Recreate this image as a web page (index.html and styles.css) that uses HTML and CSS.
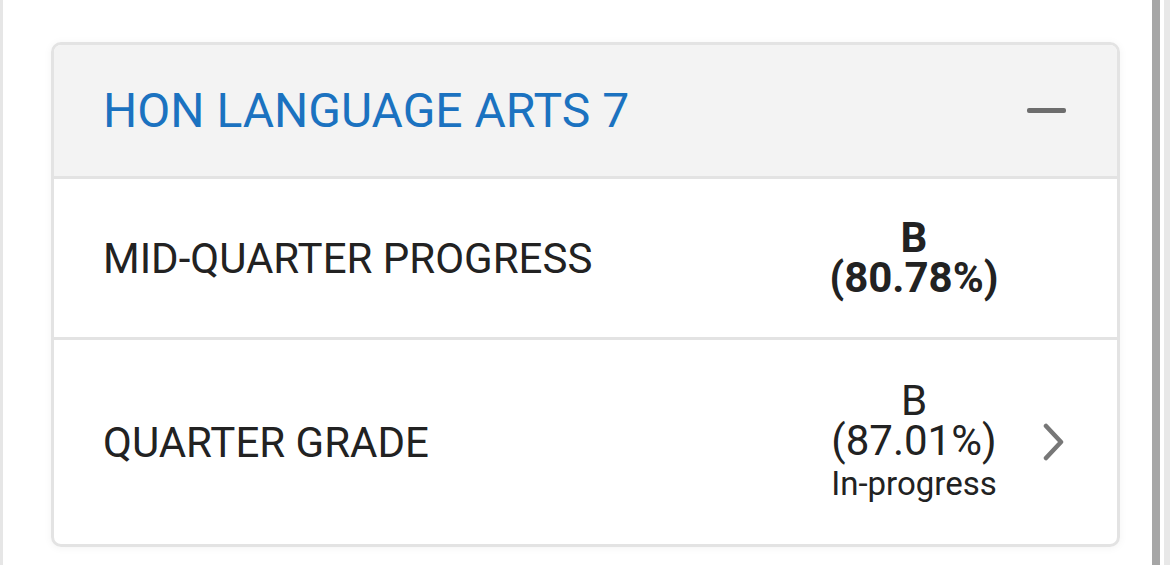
FILE: index.html
```html
<!DOCTYPE html>
<html lang="en">
<head>
    <meta charset="UTF-8">
    <meta name="viewport" content="width=device-width, initial-scale=1.0">
    <title>Grades</title>
    <link rel="stylesheet" href="styles.css">
</head>
<body>
    <div class="page">
        <div class="content">
            <div class="card">
                <div class="card-head">
                    <h2 class="course">HON LANGUAGE ARTS 7</h2>
                    <span class="collapse"></span>
                </div>
                <div class="row">
                    <div class="label">MID-QUARTER PROGRESS</div>
                    <div class="grade bold">B<br>(80.78%)</div>
                    <div class="go"></div>
                </div>
                <div class="row tall">
                    <div class="label">QUARTER GRADE</div>
                    <div class="grade">B<br>(87.01%)<span class="status">In-progress</span></div>
                    <div class="go">
                        <svg width="22" height="38" viewBox="0 0 22 38"><path d="M3 3 L18 19 L3 35" fill="none" stroke="#777" stroke-width="4.5" stroke-linecap="round" stroke-linejoin="round"/></svg>
                    </div>
                </div>
            </div>
        </div>
        <div class="scrollbar"></div>
    </div>
</body>
</html>
```

FILE: styles.css
```css
* {
    margin: 0;
    padding: 0;
    box-sizing: border-box;
}
body {
    font-family: Roboto, "Liberation Sans", sans-serif;
    background: #fff;
    color: #222;
    height: 565px;
    overflow: hidden;
}
.page {
    display: flex;
    height: 565px;
    border-left: 3px solid #e6e6e6;
}
.content {
    flex: 1;
    padding: 42px 32px 0 48px;
}
.scrollbar {
    width: 18px;
    border-left: 8px solid #a6a6a6;
    border-right: 6px solid #e8e8e8;
}
.card {
    border: 3px solid #e3e3e3;
    border-radius: 10px;
    overflow: hidden;
    box-shadow: 0 1px 8px rgba(0, 0, 0, 0.05);
}
.card-head {
    display: flex;
    align-items: center;
    justify-content: space-between;
    height: 134px;
    padding: 0 51px 0 49px;
    background: #f3f3f3;
    border-bottom: 3px solid #e3e3e3;
}
.course {
    font-weight: 400;
    font-size: 48px;
    color: #1b72c0;
}
.collapse {
    width: 39px;
    height: 5px;
    border-radius: 2px;
    background: #6d6d6d;
}
.row {
    display: flex;
    align-items: center;
    height: 161px;
    padding: 0 52px 0 49px;
    border-bottom: 3px solid #e3e3e3;
}
.row.tall {
    height: 204px;
    border-bottom: none;
}
.label {
    flex: 1;
    font-size: 42px;
}
.grade {
    width: 200px;
    text-align: center;
    font-size: 42px;
    line-height: 40px;
}
.grade.bold {
    font-weight: 700;
}
.status {
    display: block;
    margin-top: 3px;
    font-size: 33px;
    line-height: 40px;
}
.go {
    width: 51px;
    display: flex;
    justify-content: flex-end;
}
```
